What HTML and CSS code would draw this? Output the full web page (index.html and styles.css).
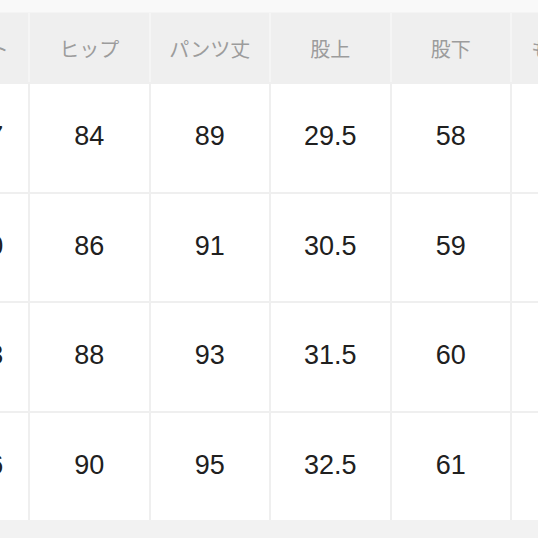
FILE: index.html
```html
<!DOCTYPE html>
<html lang="ja">
<head>
<meta charset="utf-8">
<link rel="stylesheet" href="styles.css">
</head>
<body>
<div class="page">
  <div class="top-strip"></div>
  <div class="table">
    <div class="row head">
      <div class="cell">ウエスト</div>
      <div class="cell">ヒップ</div>
      <div class="cell">パンツ丈</div>
      <div class="cell">股上</div>
      <div class="cell">股下</div>
      <div class="cell">もも周り</div>
    </div>
    <div class="row body">
      <div class="cell">64-67</div>
      <div class="cell">84</div>
      <div class="cell">89</div>
      <div class="cell">29.5</div>
      <div class="cell">58</div>
      <div class="cell">52</div>
    </div>
    <div class="row body">
      <div class="cell">67-70</div>
      <div class="cell">86</div>
      <div class="cell">91</div>
      <div class="cell">30.5</div>
      <div class="cell">59</div>
      <div class="cell">54</div>
    </div>
    <div class="row body">
      <div class="cell">70-73</div>
      <div class="cell">88</div>
      <div class="cell">93</div>
      <div class="cell">31.5</div>
      <div class="cell">60</div>
      <div class="cell">56</div>
    </div>
    <div class="row body">
      <div class="cell">73-76</div>
      <div class="cell">90</div>
      <div class="cell">95</div>
      <div class="cell">32.5</div>
      <div class="cell">61</div>
      <div class="cell">58</div>
    </div>
  </div>
</div>
</body>
</html>
```

FILE: styles.css
```css
html, body {
  margin: 0;
  padding: 0;
  background: #f2f2f2;
  overflow: hidden;
}

.page {
  width: 538px;
  height: 538px;
  overflow: hidden;
  background: #f2f2f2;
}

.top-strip {
  height: 12px;
  background: #f9f9f9;
  border-bottom: 1px solid #f4f4f4;
}

.table {
  display: flex;
  flex-direction: column;
  gap: 2px;
  margin-left: -90.5px;
  width: 760px;
  background: #efefef;
}

.row {
  display: grid;
  grid-template-columns: repeat(6, 118.5px);
  column-gap: 2px;
}

.row.head {
  height: 69px;
  background: #f5f5f5;
}

.row.body {
  height: 107.5px;
  background: #efefef;
}

.cell {
  display: flex;
  align-items: center;
  justify-content: center;
  white-space: nowrap;
}

.head .cell {
  background: #efefef;
  color: #9c9c9c;
  font-family: "Noto Sans CJK JP", "Noto Sans", sans-serif;
  font-size: 20px;
  padding-top: 1px;
}

.body .cell {
  background: #ffffff;
  color: #202020;
  font-family: "Liberation Sans", Arial, sans-serif;
  font-size: 27px;
  padding-bottom: 2px;
}
```
